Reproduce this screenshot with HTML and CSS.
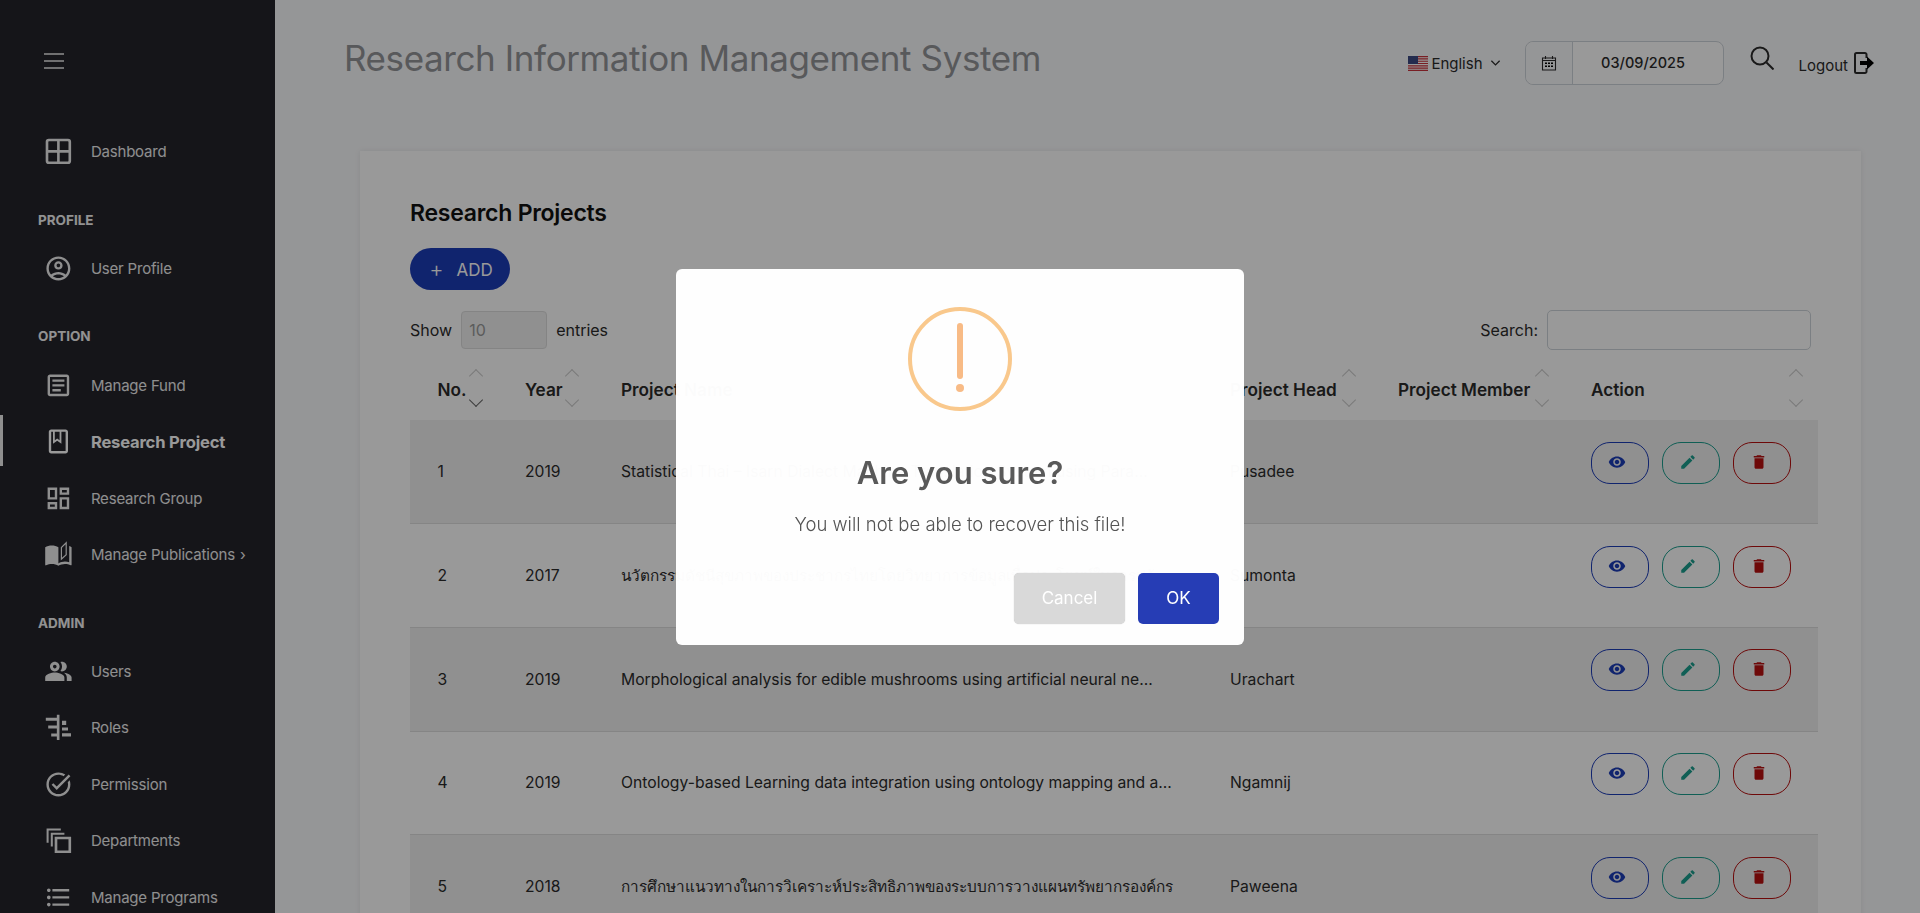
FILE: index.html
```html
<!DOCTYPE html>
<html lang="en">
<head>
  <meta charset="UTF-8">
  <meta name="viewport" content="width=device-width, initial-scale=1.0">
  <title>Research Projects</title>
  <link rel="stylesheet" href="styles.css">
</head>
<body>
  <!-- Icon sprites -->
  <svg class="sprites" xmlns="http://www.w3.org/2000/svg">
    <symbol id="i-grid" viewBox="0 0 24 24"><path d="M4 2.500h16A1.500 1.500 0 0 1 21.500 4v16a1.500 1.500 0 0 1-1.500 1.500H4A1.500 1.500 0 0 1 2.500 20V4A1.500 1.500 0 0 1 4 2.500zM12 2.500v19M2.500 12h19" fill="none" stroke="currentColor" stroke-width="2.200"/></symbol>
    <symbol id="i-account" viewBox="0 0 24 24"><path d="M12 2C6.480 2 2 6.480 2 12s4.480 10 10 10 10-4.480 10-10S17.520 2 12 2zM7.350 18.500C8.660 17.560 10.260 17 12 17s3.340.560 4.650 1.500C15.340 19.440 13.740 20 12 20s-3.340-.560-4.650-1.500zm10.790-1.380C16.450 15.800 14.320 15 12 15s-4.450.800-6.140 2.120C4.700 15.730 4 13.950 4 12c0-4.420 3.580-8 8-8s8 3.580 8 8c0 1.950-.700 3.730-1.860 5.120zM12 6c-1.930 0-3.500 1.570-3.500 3.500S10.070 13 12 13s3.500-1.570 3.500-3.500S13.930 6 12 6zm0 5c-.830 0-1.500-.670-1.500-1.500S11.170 8 12 8s1.500.670 1.500 1.500S12.830 11 12 11z"/></symbol>
    <symbol id="i-article" viewBox="0 0 24 24"><path d="M19 5v14H5V5h14m0-2H5c-1.100 0-2 .900-2 2v14c0 1.100.900 2 2 2h14c1.100 0 2-.900 2-2V5c0-1.100-.900-2-2-2zM14 17H7v-2h7v2zm3-4H7v-2h10v2zm0-4H7V7h10v2z"/></symbol>
    <symbol id="i-book" viewBox="0 0 24 24"><path d="M18 2H6c-1.100 0-2 .900-2 2v16c0 1.100.900 2 2 2h12c1.100 0 2-.900 2-2V4c0-1.100-.900-2-2-2zM9 4h4v7l-2-1.500L9 11V4zm9 16H6V4h1.500v10l3.500-2.500 3.500 2.500V4H18v16z"/></symbol>
    <symbol id="i-group" viewBox="0 0 24 24"><path d="M19 5v2h-4V5h4M9 5v6H5V5h4m10 8v6h-4v-6h4M9 17v2H5v-2h4M21 3h-8v6h8V3zM11 3H3v10h8V3zm10 8h-8v10h8V11zm-10 4H3v6h8v-6z"/></symbol>
    <symbol id="i-stories" viewBox="0 0 24 24"><path d="M19 1l-5 5v11l5-4.500V1zm-1 2.500v8.500l-3 2.700V6.400l3-2.900zM1 6v14.650c0 .250.250.500.500.500.100 0 .150-.050.250-.050C3.100 20.450 5.050 20 6.500 20c1.950 0 4.050.400 5.500 1.500V6c-1.450-1.100-3.550-1.500-5.500-1.500S2.450 4.900 1 6zm22 13.500V6c-.600-.450-1.250-.750-2-1v13.500c-1.100-.350-2.300-.500-3.500-.500-1.700 0-4.150.650-5.500 1.500v2c1.350-.850 3.800-1.500 5.500-1.500 1.650 0 3.350.300 4.750 1.050.100.050.150.050.250.050.250 0 .500-.250.500-.500v-1.100z"/></symbol>
    <symbol id="i-users" viewBox="0 0 24 24"><path d="M16.670 13.130C18.040 14.060 19 15.320 19 17v3h4v-3c0-2.180-3.570-3.470-6.330-3.870zM15 12c2.210 0 4-1.790 4-4s-1.790-4-4-4c-.470 0-.910.100-1.330.240C14.500 5.270 15 6.580 15 8s-.500 2.730-1.330 3.760c.420.140.860.240 1.330.240zM9 12c2.210 0 4-1.790 4-4s-1.790-4-4-4-4 1.790-4 4 1.790 4 4 4zm0-5.500c.830 0 1.500.670 1.500 1.500S9.830 9.500 9 9.500 7.500 8.830 7.500 8 8.170 6.500 9 6.500zM9 13c-2.670 0-8 1.340-8 4v3h16v-3c0-2.660-5.330-4-8-4z"/></symbol>
    <symbol id="i-roles" viewBox="0 0 24 24"><path d="M10.700 1.500h2.200v21h-2.200zM1.500 4h9.200v2.500H1.500zM3.500 10.500h7.200V13H3.500zM6 17h4.700v2.500H6zM15 6.500h3.500v3.500H15zM15 12h5v2.600h-5zM15 16.800h7.500v2.700H15z"/></symbol>
    <symbol id="i-task" viewBox="0 0 24 24"><path d="M22 5.180L10.590 16.600l-4.240-4.250 1.410-1.410 2.830 2.830 10-10L22 5.180zm-2.210 5.040c.130.570.210 1.170.210 1.780 0 4.420-3.580 8-8 8s-8-3.580-8-8 3.580-8 8-8c1.580 0 3.040.460 4.280 1.250l1.440-1.440C16.100 2.670 14.130 2 12 2 6.480 2 2 6.480 2 12s4.480 10 10 10 10-4.480 10-10c0-1.190-.220-2.330-.600-3.390l-1.610 1.610z"/></symbol>
    <symbol id="i-copy" viewBox="0 0 24 24"><path d="M3 14V3h11M6.500 17V6.500H17" fill="none" stroke="currentColor" stroke-width="1.700"/><path d="M10 10h11.500v11.500H10z" fill="none" stroke="currentColor" stroke-width="2.200"/></symbol>
    <symbol id="i-list" viewBox="0 0 24 24"><path d="M4 10.500c-.830 0-1.500.670-1.500 1.500s.670 1.500 1.500 1.500 1.500-.670 1.500-1.500-.670-1.500-1.500-1.500zm0-6c-.830 0-1.500.670-1.500 1.500S3.170 7.500 4 7.500 5.500 6.830 5.500 6 4.830 4.500 4 4.500zm0 12c-.830 0-1.500.680-1.500 1.500s.680 1.500 1.500 1.500 1.500-.680 1.500-1.500-.670-1.500-1.500-1.500zM7 19h14v-2H7v2zm0-6h14v-2H7v2zm0-8v2h14V5H7z"/></symbol>
    <symbol id="i-eye" viewBox="0 0 24 24"><path d="M12 4.500C7 4.500 2.730 7.610 1 12c1.730 4.390 6 7.500 11 7.500s9.270-3.110 11-7.500c-1.730-4.390-6-7.500-11-7.500zM12 17c-2.760 0-5-2.240-5-5s2.240-5 5-5 5 2.240 5 5-2.240 5-5 5zm0-8c-1.660 0-3 1.340-3 3s1.340 3 3 3 3-1.340 3-3-1.340-3-3-3z"/></symbol>
    <symbol id="i-pencil" viewBox="0 0 24 24"><path d="M3 17.250V21h3.750L17.810 9.940l-3.750-3.750L3 17.250zM20.710 7.040c.390-.390.390-1.020 0-1.410l-2.340-2.340c-.390-.390-1.020-.390-1.410 0l-1.830 1.830 3.750 3.750 1.830-1.830z"/></symbol>
    <symbol id="i-trash" viewBox="0 0 24 24"><path d="M6 19c0 1.100.900 2 2 2h8c1.100 0 2-.900 2-2V7H6v12zM19 4h-3.500l-1-1h-5l-1 1H5v2h14V4z"/></symbol>
  </svg>

  <div class="layout">
    <!-- Sidebar -->
    <aside class="sidebar">
      <svg class="burger" viewBox="0 0 20 16"><path d="M0 1h20M0 8h20M0 15h20" stroke="currentColor" stroke-width="1.500"/></svg>

      <a class="nav-item"><svg class="nav-icon"><use href="#i-grid"/></svg>Dashboard</a>

      <div class="nav-title">PROFILE</div>
      <a class="nav-item"><svg class="nav-icon"><use href="#i-account"/></svg>User Profile</a>

      <div class="nav-title">OPTION</div>
      <a class="nav-item"><svg class="nav-icon"><use href="#i-article"/></svg>Manage Fund</a>
      <a class="nav-item active"><svg class="nav-icon"><use href="#i-book"/></svg>Research Project</a>
      <a class="nav-item"><svg class="nav-icon"><use href="#i-group"/></svg>Research Group</a>
      <a class="nav-item"><svg class="nav-icon"><use href="#i-stories"/></svg>Manage Publications<span class="nav-more">›</span></a>

      <div class="nav-title">ADMIN</div>
      <a class="nav-item"><svg class="nav-icon"><use href="#i-users"/></svg>Users</a>
      <a class="nav-item"><svg class="nav-icon"><use href="#i-roles"/></svg>Roles</a>
      <a class="nav-item"><svg class="nav-icon"><use href="#i-task"/></svg>Permission</a>
      <a class="nav-item"><svg class="nav-icon"><use href="#i-copy"/></svg>Departments</a>
      <a class="nav-item"><svg class="nav-icon"><use href="#i-list"/></svg>Manage Programs</a>
    </aside>

    <main class="main">
      <!-- Top bar -->
      <header class="topbar">
        <h1 class="app-title">Research Information Management System</h1>
        <div class="tools">
          <svg class="flag" viewBox="0 0 20 15">
            <rect width="20" height="15" fill="#fff"/>
            <path d="M0 .6h20M0 2.900h20M0 5.200h20M0 7.500h20M0 9.800h20M0 12.100h20M0 14.400h20" stroke="#c8323c" stroke-width="1.150"/>
            <rect width="10" height="8" fill="#3c4a82"/>
          </svg>
          <span class="lang">English</span>
          <svg class="lang-caret" viewBox="0 0 12 8"><path d="M1.500 1.500L6 6l4.500-4.500" fill="none" stroke="currentColor" stroke-width="1.400"/></svg>
          <div class="date-box">
            <span class="date-icon">
              <svg viewBox="0 0 16 16" width="16" height="16"><path d="M1.500 3h13v12h-13zM4.500 1v3M11.500 1v3M1.500 5.500h13" fill="none" stroke="currentColor" stroke-width="1.100"/><path d="M4 7.500h2v1.500H4zM7 7.500h2v1.500H7zM10 7.500h2v1.500h-2zM4 10.500h2V12H4zM7 10.500h2V12H7zM10 10.500h2V12h-2z"/></svg>
            </span>
            <span class="date-value">03/09/2025</span>
          </div>
          <svg class="search-icon" viewBox="0 0 24 24"><circle cx="10" cy="10" r="8.500" fill="none" stroke="currentColor" stroke-width="2"/><path d="M16.500 16.500L23.500 23.500" stroke="currentColor" stroke-width="2"/></svg>
          <span class="logout">Logout</span>
          <svg class="logout-icon" viewBox="0 0 20 22"><path d="M12.500 6V2.500a1.500 1.500 0 0 0-1.500-1.500H2.500A1.500 1.500 0 0 0 1 2.500v17A1.500 1.500 0 0 0 2.500 21H11a1.500 1.500 0 0 0 1.500-1.500V16" fill="none" stroke="currentColor" stroke-width="2"/><path d="M6 9h7V4.500l7 6.500-7 6.500V13H6z"/></svg>
        </div>
      </header>

      <!-- Projects card -->
      <section class="card">
        <h2 class="card-title">Research Projects</h2>
        <button class="add-btn"><span class="add-plus">+</span>ADD</button>

        <div class="filters">
          <div class="show">
            <span>Show</span>
            <span class="page-size">10</span>
            <span>entries</span>
          </div>
          <div class="search">
            <span>Search:</span>
            <span class="search-input"></span>
          </div>
        </div>

        <table class="projects">
          <colgroup>
            <col class="col-no"><col class="col-year"><col class="col-name"><col class="col-head"><col class="col-member"><col class="col-action">
          </colgroup>
          <thead>
            <tr>
              <th class="sort sorted">No.</th>
              <th class="sort">Year</th>
              <th class="sort">Project Name</th>
              <th class="sort">Project Head</th>
              <th class="sort">Project Member</th>
              <th class="sort">Action</th>
            </tr>
          </thead>
          <tbody>
            <tr>
              <td>1</td><td>2019</td><td>Statistical Thai – Isarn Dialect Machine Translation System using Para...</td><td>Pusadee</td><td></td>
              <td><div class="actions">
                <button class="act act-view"><svg><use href="#i-eye"/></svg></button>
                <button class="act act-edit"><svg><use href="#i-pencil"/></svg></button>
                <button class="act act-del"><svg><use href="#i-trash"/></svg></button>
              </div></td>
            </tr>
            <tr>
              <td>2</td><td>2017</td><td class="thai">นวัตกรรมดัชนีสุขภาพของประชากรไทยโดยวิทยาการข้อมูลเพื่อประโยชน์ในการปรั...</td><td>Sumonta</td><td></td>
              <td><div class="actions">
                <button class="act act-view"><svg><use href="#i-eye"/></svg></button>
                <button class="act act-edit"><svg><use href="#i-pencil"/></svg></button>
                <button class="act act-del"><svg><use href="#i-trash"/></svg></button>
              </div></td>
            </tr>
            <tr>
              <td>3</td><td>2019</td><td>Morphological analysis for edible mushrooms using artificial neural ne...</td><td>Urachart</td><td></td>
              <td><div class="actions">
                <button class="act act-view"><svg><use href="#i-eye"/></svg></button>
                <button class="act act-edit"><svg><use href="#i-pencil"/></svg></button>
                <button class="act act-del"><svg><use href="#i-trash"/></svg></button>
              </div></td>
            </tr>
            <tr>
              <td>4</td><td>2019</td><td>Ontology-based Learning data integration using ontology mapping and a...</td><td>Ngamnij</td><td></td>
              <td><div class="actions">
                <button class="act act-view"><svg><use href="#i-eye"/></svg></button>
                <button class="act act-edit"><svg><use href="#i-pencil"/></svg></button>
                <button class="act act-del"><svg><use href="#i-trash"/></svg></button>
              </div></td>
            </tr>
            <tr>
              <td>5</td><td>2018</td><td class="thai">การศึกษาแนวทางในการวิเคราะห์ประสิทธิภาพของระบบการวางแผนทรัพยากรองค์กร</td><td>Paweena</td><td></td>
              <td><div class="actions">
                <button class="act act-view"><svg><use href="#i-eye"/></svg></button>
                <button class="act act-edit"><svg><use href="#i-pencil"/></svg></button>
                <button class="act act-del"><svg><use href="#i-trash"/></svg></button>
              </div></td>
            </tr>
          </tbody>
        </table>
      </section>
    </main>
  </div>

  <!-- Confirm dialog -->
  <div class="overlay">
    <div class="modal">
      <div class="warn-icon"><span class="warn-bar"></span><span class="warn-dot"></span></div>
      <h2 class="modal-title">Are you sure?</h2>
      <p class="modal-text">You will not be able to recover this file!</p>
      <div class="modal-buttons">
        <button class="btn-cancel">Cancel</button>
        <button class="btn-ok">OK</button>
      </div>
    </div>
  </div>
</body>
</html>
```

FILE: styles.css
```css
* {
  box-sizing: border-box;
}
body {
  margin: 0;
  height: 913px;
  overflow: hidden;
  font-family: Inter, "Noto Sans", sans-serif;
  background-color: #f9fafc;
  color: #2b2b2b;
}
h1, h2, p {
  margin: 0;
}
button {
  font-family: inherit;
  border: none;
  cursor: pointer;
}
.sprites {
  display: none;
}
.layout {
  display: flex;
  height: 913px;
}

/* Sidebar */
.sidebar {
  flex: none;
  width: 275px;
  height: 913px;
  overflow: hidden;
  padding-top: 53px;
  background-color: #23232b;
  color: #eee;
}
.burger {
  display: block;
  width: 20px;
  height: 16px;
  margin: 0 0 54.300px 44px;
}
.nav-item {
  position: relative;
  display: flex;
  align-items: center;
  height: 56.5px;
  padding-left: 43.600px;
  font-size: 15px;
  letter-spacing: -.2px;
}
.nav-icon {
  flex: none;
  width: 28.800px;
  height: 28.800px;
  margin-right: 18.500px;
  fill: currentColor;
}
.nav-item.active {
  font-size: 16.600px;
  font-weight: 700;
  color: #fff;
}
.nav-item.active::before {
  content: "";
  position: absolute;
  left: 0;
  top: 2px;
  width: 3px;
  height: 51px;
  background-color: #eee;
}
.nav-more {
  margin-left: 5px;
}
.nav-title {
  height: 17px;
  margin: 31.750px 0 11.5px 38px;
  font-size: 13.5px;
  line-height: 17px;
  font-weight: 700;
  color: #f4f4f4;
}

/* Top bar */
.main {
  flex: 1;
  min-width: 0;
}
.topbar {
  display: flex;
  justify-content: space-between;
  align-items: flex-start;
  height: 151px;
  padding: 36px 46px 0 69px;
}
.app-title {
  font-size: 35px;
  line-height: 44px;
  font-weight: 400;
  letter-spacing: -.4px;
  color: #939498;
}
.tools {
  display: flex;
  align-items: center;
  height: 44px;
  margin-top: 5px;
  font-size: 15px;
}
.flag {
  width: 20px;
  height: 15px;
  margin-right: 3px;
}
.lang-caret {
  width: 11px;
  height: 8px;
  margin: 0 24px 0 7px;
}
.date-box {
  display: flex;
  width: 199px;
  height: 44px;
  border: 1px solid #ced4da;
  border-radius: 8px;
  background-color: #fff;
}
.date-icon {
  display: flex;
  align-items: center;
  justify-content: center;
  flex: none;
  width: 47px;
  border-right: 1px solid #ced4da;
  background-color: #f9fafc;
  border-radius: 8px 0 0 8px;
}
.date-value {
  flex: 1;
  padding-right: 9px;
  text-align: center;
  line-height: 42px;
  font-size: 14.5px;
  font-weight: 500;
}
.search-icon {
  width: 24px;
  height: 24px;
  margin: -10px 25px 0 26px;
}
.logout {
  margin: 4px 6px 0 0;
}
.logout-icon {
  width: 20px;
  height: 22px;
}

/* Card */
.card {
  height: 800px;
  margin: 0 59px 0 85px;
  padding: 47px 43px 0 50px;
  background-color: #fff;
  box-shadow: 0 0 6px rgba(0, 0, 0, .08);
}
.card-title {
  font-size: 23px;
  line-height: 30px;
  font-weight: 600;
  letter-spacing: -.25px;
  color: #111;
}
.add-btn {
  display: block;
  width: 100px;
  height: 42px;
  margin-top: 20px;
  padding-left: 8px;
  border-radius: 21px;
  background-color: #1c3cb8;
  color: #fff;
  font-size: 17px;
}
.add-plus {
  margin-right: 13px;
  font-size: 22px;
  font-weight: 300;
  vertical-align: -1px;
}
.filters {
  display: flex;
  justify-content: space-between;
  align-items: center;
  height: 40px;
  margin: 20px 7px 0 0;
  font-size: 16px;
}
.show, .search {
  display: flex;
  align-items: center;
}
.page-size {
  width: 86px;
  height: 38px;
  margin: 0 9px;
  padding-left: 7px;
  border: 1px solid #ddd;
  border-radius: 4px;
  background-color: #f0f0f0;
  line-height: 36px;
  color: #999;
}
.search-input {
  width: 264px;
  height: 40px;
  margin-left: 9px;
  border: 1px solid #ced4da;
  border-radius: 5px;
}

/* Table */
.projects {
  width: 1408px;
  margin-top: 10px;
  border-collapse: collapse;
  table-layout: fixed;
  font-size: 15.700px;
}
.col-no { width: 87.5px; }
.col-year { width: 96px; }
.col-name { width: 609px; }
.col-head { width: 168px; }
.col-member { width: 193px; }
.col-action { width: 254.5px; }
.projects th {
  height: 60px;
  padding: 0 0 1px 27.5px;
  text-align: left;
  font-size: 17.200px;
  font-weight: 600;
  white-space: nowrap;
}
.projects td {
  height: 103.700px;
  padding: 0 0 0 27.5px;
  border-bottom: 1px solid #dedede;
  white-space: nowrap;
  overflow: hidden;
}
.projects td.thai {
  font-size: 15.350px;
}
.projects tbody tr:nth-child(odd) {
  background-color: #f0f0f0;
}
.sort {
  position: relative;
}
.sort::before, .sort::after {
  content: "";
  position: absolute;
  right: 17px;
  width: 9px;
  height: 9px;
  border-left: 1.5px solid #ccc;
  border-top: 1.5px solid #ccc;
  transform: rotate(45deg);
}
.sort::before {
  top: 11px;
}
.sort::after {
  bottom: 15px;
  transform: rotate(225deg);
}
.sorted::after {
  border-color: #666;
}
.actions {
  display: flex;
  gap: 13px;
  margin-bottom: 18px;
}
.act {
  display: flex;
  align-items: center;
  justify-content: center;
  width: 58px;
  height: 42px;
  padding: 0 6px 2px 0;
  border-radius: 19px;
  background: none;
  border: 1px solid;
}
.act svg {
  width: 18px;
  height: 18px;
  fill: currentColor;
}
.act-view { color: #1c3cb8; }
.act-edit { color: #1b9e8e; }
.act-del { color: #b81010; }

/* Confirm dialog */
.overlay {
  position: fixed;
  top: 0;
  left: 0;
  width: 100%;
  height: 100%;
  display: flex;
  align-items: center;
  justify-content: center;
  background-color: rgba(0, 0, 0, .4);
}
.modal {
  display: flex;
  flex-direction: column;
  align-items: center;
  width: 568px;
  height: 376px;
  padding: 38px 25px 0;
  border-radius: 6px;
  background-color: rgba(255, 255, 255, .985);
}
.warn-icon {
  position: relative;
  flex: none;
  width: 104px;
  height: 104px;
  border: 4px solid #f9c88c;
  border-radius: 50%;
}
.warn-bar {
  position: absolute;
  left: 45px;
  top: 12px;
  width: 6px;
  height: 56px;
  border-radius: 3px;
  background-color: #f8bb86;
}
.warn-dot {
  position: absolute;
  left: 44px;
  top: 73px;
  width: 8px;
  height: 8px;
  border-radius: 50%;
  background-color: #f8bb86;
}
.modal-title {
  margin-top: 41px;
  font-size: 31px;
  line-height: 42px;
  font-weight: 600;
  color: #595959;
}
.modal-text {
  margin-top: 17px;
  font-size: 18.5px;
  line-height: 26px;
  font-weight: 300;
  color: #545454;
}
.modal-buttons {
  display: flex;
  justify-content: flex-end;
  gap: 13px;
  width: 100%;
  margin-top: 36px;
}
.modal-buttons button {
  height: 51px;
  border-radius: 5px;
  color: #fff;
  font-size: 17px;
}
.btn-cancel {
  width: 111px;
  background-color: #d9d9d9;
  box-shadow: 0 0 1px #bbb;
}
.btn-ok {
  width: 81px;
  background-color: #263db5;
}
```
